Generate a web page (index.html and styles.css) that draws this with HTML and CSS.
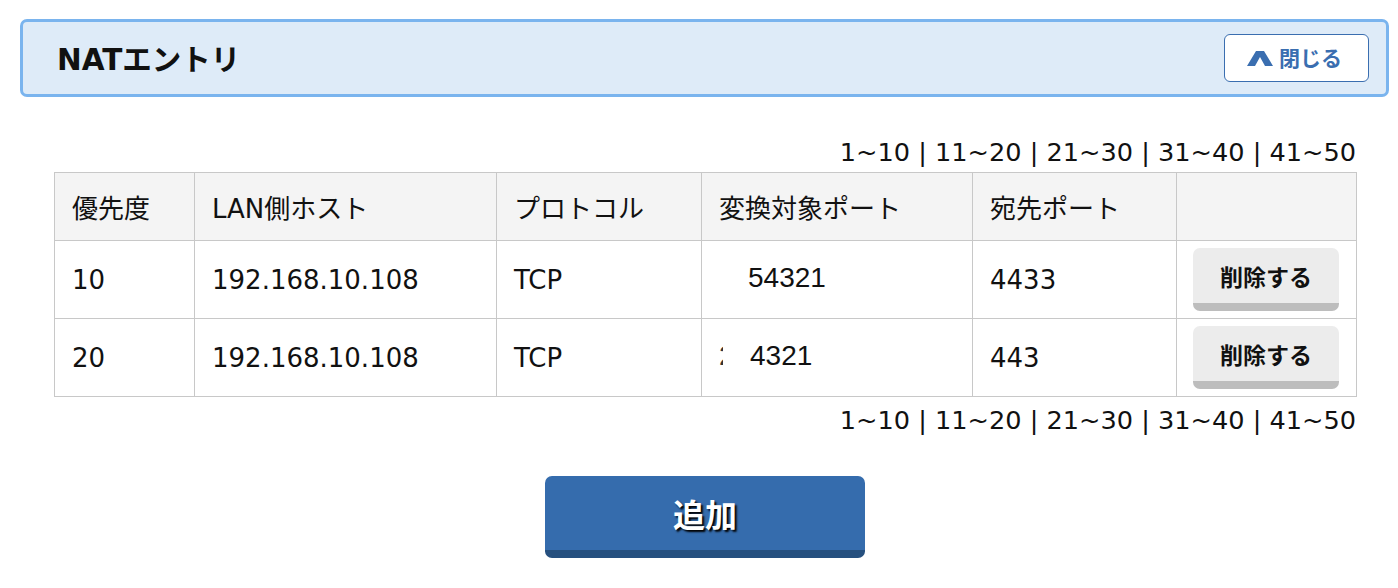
FILE: index.html
```html
<!DOCTYPE html>
<html lang="ja">
<head>
<meta charset="utf-8">
<title>NATエントリ</title>
<link rel="stylesheet" href="styles.css">
</head>
<body>
<div class="panel-head">
  <h2 class="panel-title">NATエントリ</h2>
  <button class="close-btn" type="button">
    <svg class="chev" width="26" height="16" viewBox="0 0 26 16"><path d="M0 16 L9 1 L17 1 L26 16 L18 16 L13 7 L8 16 Z" fill="#3a6eb0"/></svg>
    <span>閉じる</span>
  </button>
</div>

<div class="content">
  <div class="pager">1~10 | 11~20 | 21~30 | 31~40 | 41~50</div>
  <table class="nat">
    <colgroup>
      <col class="c1"><col class="c2"><col class="c3"><col class="c4"><col class="c5"><col class="c6">
    </colgroup>
    <thead>
      <tr><th>優先度</th><th>LAN側ホスト</th><th>プロトコル</th><th>変換対象ポート</th><th>宛先ポート</th><th></th></tr>
    </thead>
    <tbody>
      <tr>
        <td>10</td><td>192.168.10.108</td><td>TCP</td>
        <td class="port"><span class="pv">54321</span></td>
        <td>4433</td>
        <td class="act"><button class="del-btn" type="button">削除する</button></td>
      </tr>
      <tr>
        <td>20</td><td>192.168.10.108</td><td>TCP</td>
        <td class="port"><span class="frag">2</span><span class="pv2">4321</span></td>
        <td>443</td>
        <td class="act"><button class="del-btn" type="button">削除する</button></td>
      </tr>
    </tbody>
  </table>
  <div class="pager pager-bottom">1~10 | 11~20 | 21~30 | 31~40 | 41~50</div>
  <div class="add-row"><button class="add-btn" type="button">追加</button></div>
</div>
</body>
</html>
```

FILE: styles.css
```css
* { box-sizing: border-box; }
body {
  margin: 0;
  background: #fff;
  color: #111;
  font-family: "DejaVu Sans", "Noto Sans CJK JP", sans-serif;
}
.panel-head {
  margin: 19px 9px 0 20px;
  height: 78px;
  border: 3px solid #7ab4ee;
  border-radius: 7px;
  background: #deebf8;
  display: flex;
  align-items: center;
  justify-content: space-between;
  padding: 0 17px 0 34px;
}
.panel-title {
  margin: 0 0 3px 0;
  font-family: "DejaVu Sans", "Noto Sans CJK JP", sans-serif;
  font-size: 29.5px;
  font-weight: 700;
  color: #111;
}
.close-btn {
  width: 145px;
  height: 48px;
  background: #fff;
  border: 1px solid #3a6eb0;
  border-radius: 6px;
  display: flex;
  align-items: center;
  justify-content: center;
  gap: 6px;
  color: #3a6eb0;
  font-family: "Noto Sans CJK JP", sans-serif;
  font-size: 21px;
  font-weight: 700;
  padding: 0 4px 2px 0;
}
.chev { display: block; margin-top: 2px; }
.content {
  margin: 0 42px 0 54px;
}
.pager {
  text-align: right;
  font-size: 25.6px;
  line-height: 30px;
  margin-top: 40px;
  height: 35px;
  color: #111;
}
.pager-bottom { margin-top: 8px; height: 30px; }
.nat {
  width: 100%;
  border-collapse: collapse;
  table-layout: fixed;
  font-size: 26px;
}
.c1 { width: 140px; }
.c2 { width: 302px; }
.c3 { width: 205px; }
.c4 { width: 271px; }
.c5 { width: 204px; }
.c6 { width: 180px; }
.nat th, .nat td {
  border: 1px solid #c8c8c8;
  text-align: left;
  padding: 0 0 0 17px;
  font-weight: 400;
  vertical-align: middle;
  white-space: nowrap;
}
.nat th {
  background: #f4f4f4;
  height: 68px;
}
.nat td { height: 78px; }
.nat td.port {
  font-family: "Liberation Sans", Arial, sans-serif;
  font-size: 28px;
  padding-left: 0;
}
.pv { margin-left: 46px; position: relative; top: -2px; }
.frag {
  display: inline-block;
  width: 4px;
  overflow: hidden;
  margin-left: 17px;
  vertical-align: top;
  position: relative;
  top: -2px;
  color: #333;
}
.pv2 { margin-left: 27px; position: relative; top: -2px; }
.nat td.act { padding: 0 0 0 16px; }
.del-btn {
  width: 146px;
  height: 63px;
  background: #ececec;
  border: none;
  border-bottom: 8px solid #bdbdbd;
  border-radius: 7px;
  font-family: "Noto Sans CJK JP", sans-serif;
  font-size: 23px;
  font-weight: 700;
  color: #111;
  padding: 0;
  display: block;
}
.add-row {
  display: flex;
  justify-content: center;
  margin-top: 41px;
}
.add-btn {
  width: 320px;
  height: 82px;
  background: #356cad;
  border: none;
  border-bottom: 8px solid #26507f;
  border-radius: 7px;
  color: #fff;
  font-family: "Noto Sans CJK JP", sans-serif;
  font-size: 32px;
  font-weight: 700;
  text-shadow: 2px 2px 2px #000;
  padding: 0;
}
```
